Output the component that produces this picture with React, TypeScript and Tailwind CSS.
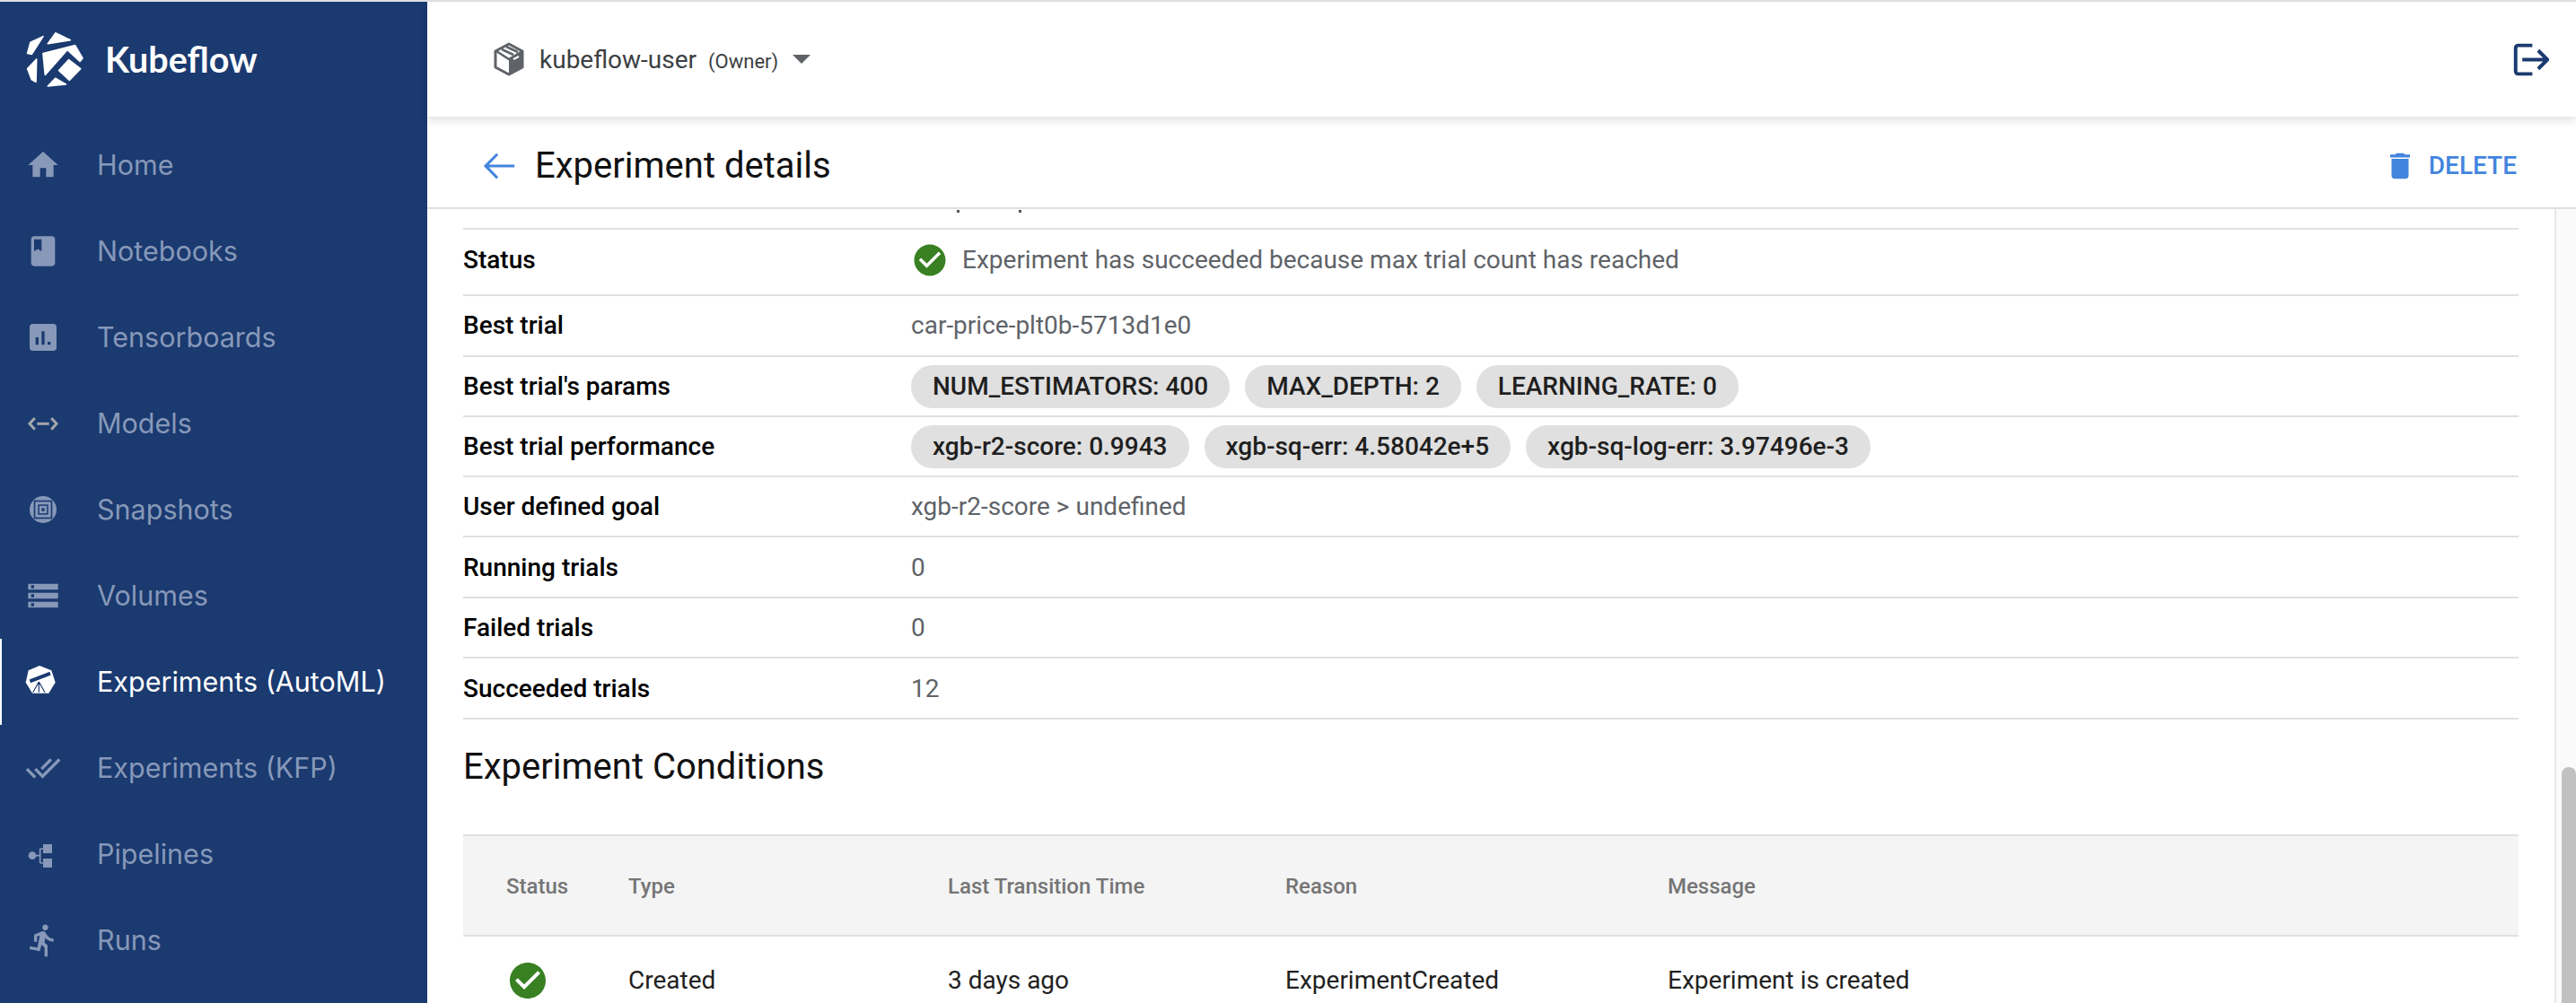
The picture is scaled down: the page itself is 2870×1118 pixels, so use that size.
const navItems = [
  { label: 'Home', icon: <path d="M10 20v-6h4v6h5v-8h3L12 3 2 12h3v8z" /> },
  { label: 'Notebooks', icon: <path fillRule="evenodd" d="M18 2H6c-1.1 0-2 .9-2 2v16c0 1.1.9 2 2 2h12c1.1 0 2-.9 2-2V4c0-1.1-.9-2-2-2zM6 4h5v8l-2.5-1.5L6 12V4z" /> },
  { label: 'Tensorboards', icon: <path fillRule="evenodd" d="M19 3H5c-1.1 0-2 .9-2 2v14c0 1.1.9 2 2 2h14c1.1 0 2-.9 2-2V5c0-1.1-.9-2-2-2zM9 17H7v-5h2v5zm4 0h-2V8h2v9zm4 0h-2v-2h2v2z" /> },
  {
    label: 'Models',
    icon: (
      <g fill="none" stroke="#a3a8ab" strokeWidth="1.8">
        <path d="M6.5 8.4 3 12.2l3.5 3.8" />
        <path d="M17.5 8.4l3.5 3.8-3.5 3.8" />
        <path d="M8 12.2h8" />
      </g>
    ),
  },
  {
    label: 'Snapshots',
    icon: (
      <g>
        <circle cx="12" cy="12" r="9" />
        <rect x="5.8" y="5.8" width="12.4" height="12.4" fill="#1a3a70" />
        <rect x="6.8" y="6.8" width="10.4" height="10.4" fill="#8798b8" />
        <rect x="8.6" y="8.6" width="6.8" height="6.8" fill="#1a3a70" />
        <rect x="9.5" y="9.5" width="5" height="5" fill="#8798b8" />
        <rect x="11" y="11" width="2" height="2" fill="#1a3a70" />
      </g>
    ),
  },
  { label: 'Volumes', icon: <path fillRule="evenodd" d="M2 20h20v-4H2v4zm2-3h2v2H4v-2zM2 4v4h20V4H2zm4 3H4V5h2v2zm-4 7h20v-4H2v4zm2-3h2v2H4v-2z" /> },
  {
    label: 'Experiments (AutoML)',
    active: true,
    icon: (
      <g>
        <path d="M9.6 1.2 17.6 4.4l2.6 8-4.4 7.2H4.8L.4 12.4l1.8-8z" />
        <path d="M3.2 11.6 16.8 6.4" stroke="#1a3a70" strokeWidth="2.4" fill="none" />
        <path d="M9.2 12 5.2 19M9.2 12v7M9.2 12l4 7" stroke="#1a3a70" strokeWidth=".7" fill="none" />
      </g>
    ),
  },
  { label: 'Experiments (KFP)', icon: <path d="M18 7l-1.41-1.41-6.34 6.34 1.41 1.41L18 7zm4.24-1.41L11.66 16.17 7.48 12l-1.41 1.41L11.66 19l12-12-1.42-1.41zM.41 13.41L6 19l1.41-1.41L1.83 12 .41 13.41z" /> },
  {
    label: 'Pipelines',
    icon: (
      <g>
        <circle cx="4.8" cy="13" r="2.6" />
        <rect x="12" y="5.4" width="6" height="6" />
        <rect x="12" y="15" width="6" height="6" />
        <path d="M5 13h5M10 8.4v9.6M10 8.4h3M10 18h3" stroke="currentColor" strokeWidth="1" fill="none" />
      </g>
    ),
  },
  { label: 'Runs', icon: <path d="M13.49 5.48c1.1 0 2-.9 2-2s-.9-2-2-2-2 .9-2 2 .9 2 2 2zm-3.6 13.9l1-4.4 2.1 2v6h2v-7.5l-2.1-2 .6-3c1.3 1.5 3.3 2.5 5.5 2.5v-2c-1.9 0-3.5-1-4.3-2.4l-1-1.6c-.4-.6-1-1-1.7-1-.3 0-.5.1-.8.1l-5.2 2.2v4.7h2v-3.4l1.8-.7-1.6 8.1-4.9-1-.4 2 7 1.4z" /> },
];

function CheckIcon({ className }: { className: string }) {
  return (
    <svg className={className} viewBox="0 0 24 24" fill="#388022">
      <path d="M12 2C6.48 2 2 6.48 2 12s4.48 10 10 10 10-4.48 10-10S17.52 2 12 2zm-2 15l-5-5 1.41-1.41L10 14.17l7.59-7.59L19 8l-9 9z" />
    </svg>
  );
}

function Chip({ text }: { text: string }) {
  return <span className="flex h-[48px] items-center rounded-full bg-[#e0e0e0] px-[24px] font-medium text-[#1f1f1f]">{text}</span>;
}

function DetailRow({ label, height, children }: { label: string; height: string; children: React.ReactNode }) {
  return (
    <div className={`flex items-center border-b-2 border-[#e0e0e0] ${height}`}>
      <div className="w-[499px] shrink-0 font-medium text-black">{label}</div>
      <div className="flex items-center gap-[17px] text-[#5f6368]">{children}</div>
    </div>
  );
}

export default function App() {
  return (
    <div className="flex h-[1118px] w-[2870px] overflow-hidden border-t-2 border-[#dedee3] bg-white font-['Roboto',sans-serif] text-[28px]">
      <aside className="w-[476px] shrink-0 bg-[#1a3a70]">
        <div className="flex h-[134px] items-center pb-[6px] pl-[20px]">
          <svg className="size-[80px]" viewBox="0 0 240 240" fill="#fff" stroke="#fff" strokeWidth="5" strokeLinejoin="round">
            <polygon points="32,100 42,64 84,44 46,103" />
            <polygon points="100,68 126,32 175,56" />
            <polygon points="84,101 191,74 216,117 207,127 165,88 91,172" />
            <polygon points="137,158 170,122 209,152 172,190" />
            <polygon points="32,152 62,120 60,196 46,188" />
            <polygon points="100,210 125,184 160,204" />
          </svg>
          <span className="ml-[17px] font-['Lato',sans-serif] text-[39.5px] font-bold text-white">Kubeflow</span>
        </div>
        <nav className="font-['Inter',sans-serif] text-[30.5px] text-[#8798b8]">
          {navItems.map((item) => (
            <div
              key={item.label}
              className={`flex h-[96px] items-center gap-[40px] ${item.active ? 'border-l-2 border-white pl-[26px] text-white' : 'pl-[28px]'}`}
            >
              <svg className="size-[40px] shrink-0" viewBox="0 0 24 24" fill="currentColor">
                {item.icon}
              </svg>
              <span>{item.label}</span>
            </div>
          ))}
        </nav>
      </aside>

      <main className="flex min-w-0 flex-1 flex-col">
        <header className="z-10 flex h-[128px] shrink-0 items-center justify-between bg-white pl-[72px] pr-[30px] shadow-[0_4px_10px_rgba(0,0,0,0.13)]">
          <div className="flex items-center text-[#3c4043]">
            <svg className="h-[38px] w-[38px]" viewBox="0 0 36 38">
              <path d="M18 2 3 10v18l15 8 15-8V10z" fill="#fff" stroke="#5f6368" strokeWidth="3" strokeLinejoin="round" />
              <path d="M18 19 33 10v18l-15 8z" fill="#5f6368" />
              <path d="M4 10 18 19 33 10" fill="none" stroke="#5f6368" strokeWidth="2.5" />
              <path d="M10 8l13 6M15 5l13 6" stroke="#5f6368" strokeWidth="2.5" fill="none" />
              <path d="M23 19l6-3" stroke="#fff" strokeWidth="2" />
            </svg>
            <span className="ml-[15px] pt-[2px] text-[28px]">kubeflow-user</span>
            <span className="ml-[13px] pt-[4px] text-[22px]">(Owner)</span>
            <svg className="ml-[16px] h-[10px] w-[20px]" viewBox="0 0 20 10" fill="#5f6368">
              <path d="M0 0h20L10 10z" />
            </svg>
          </div>
          <svg className="size-[41px]" viewBox="0 0 44 44" fill="none" stroke="#1a3a70" strokeWidth="4.2">
            <path d="M24 5H7a3 3 0 0 0-3 3v28a3 3 0 0 0 3 3h17" />
            <path d="M12 22h30M31 11l11 11-11 11" />
          </svg>
        </header>

        <div className="flex h-[103px] shrink-0 items-center justify-between border-b-2 border-[#e0e0e0] bg-white pl-[56px] pr-[66px] pt-[9px]">
          <div className="flex items-center gap-[18px]">
            <svg className="size-[46px]" viewBox="0 0 24 24" fill="#4285de">
              <path d="M21.5 11.2H6.6l5.5-5.6-1.1-1.1-7.4 7.5 7.4 7.5 1.1-1.1-5.5-5.6h14.9z" />
            </svg>
            <h1 className="text-[40px] text-[#111]">Experiment details</h1>
          </div>
          <div className="flex items-center gap-[13px] font-medium text-[#4285de]">
            <svg className="size-[38px]" viewBox="0 0 24 24" fill="currentColor">
              <path d="M6 19c0 1.1.9 2 2 2h8c1.1 0 2-.9 2-2V7H6v12zM19 4h-3.5l-1-1h-5l-1 1H5v2h14V4z" />
            </svg>
            <span>DELETE</span>
          </div>
        </div>

        <div className="flex min-h-0 flex-1">
          <div className="min-w-0 flex-1 overflow-hidden px-[40px]">
            <div className="flex h-[23px] border-b-2 border-[#e0e0e0] pl-[550px]">
              <span className="mt-[1px] h-[3px] w-[3px] bg-[#555]" />
              <span className="ml-[66px] mt-[1px] h-[3px] w-[3px] bg-[#555]" />
            </div>
            <DetailRow label="Status" height="h-[74px] pb-[5px]">
              <CheckIcon className="size-[42px]" />
              <span className="-ml-[2px]">Experiment has succeeded because max trial count has reached</span>
            </DetailRow>
            <DetailRow label="Best trial" height="h-[68px] pb-[1px]">
              car-price-plt0b-5713d1e0
            </DetailRow>
            <DetailRow label="Best trial's params" height="h-[67px]">
              <Chip text="NUM_ESTIMATORS: 400" />
              <Chip text="MAX_DEPTH: 2" />
              <Chip text="LEARNING_RATE: 0" />
            </DetailRow>
            <DetailRow label="Best trial performance" height="h-[67px]">
              <Chip text="xgb-r2-score: 0.9943" />
              <Chip text="xgb-sq-err: 4.58042e+5" />
              <Chip text="xgb-sq-log-err: 3.97496e-3" />
            </DetailRow>
            <DetailRow label="User defined goal" height="h-[67px]">
              xgb-r2-score &gt; undefined
            </DetailRow>
            <DetailRow label="Running trials" height="h-[68px] pt-[2px]">
              0
            </DetailRow>
            <DetailRow label="Failed trials" height="h-[67px] pt-[1px]">
              0
            </DetailRow>
            <DetailRow label="Succeeded trials" height="h-[68px] pt-[2px]">
              12
            </DetailRow>

            <h2 className="flex h-[106px] items-center text-[40px] text-[#111]">Experiment Conditions</h2>
            <div className="mt-[22px] grid h-[114px] grid-cols-[184px_356px_376px_426px_1fr] items-center border-y-2 border-[#e0e0e0] bg-[#f4f4f4] pt-[1px] text-[24px] font-medium text-[#757575]">
              <div className="pl-[48px]">Status</div>
              <div>Type</div>
              <div>Last Transition Time</div>
              <div>Reason</div>
              <div>Message</div>
            </div>
            <div className="grid h-[96px] grid-cols-[184px_356px_376px_426px_1fr] items-center pt-[2px] text-[#212121]">
              <div className="pl-[48px]">
                <CheckIcon className="size-[48px]" />
              </div>
              <div>Created</div>
              <div>3 days ago</div>
              <div>ExperimentCreated</div>
              <div>Experiment is created</div>
            </div>
          </div>
          <div className="flex w-[24px] shrink-0 border-l-2 border-[#e8e8e8] bg-[#fafafa] pl-[6px] pt-[622px]">
            <div className="w-[16px] flex-1 rounded-t-full bg-[#c1c1c1]" />
          </div>
        </div>
      </main>
    </div>
  );
}
